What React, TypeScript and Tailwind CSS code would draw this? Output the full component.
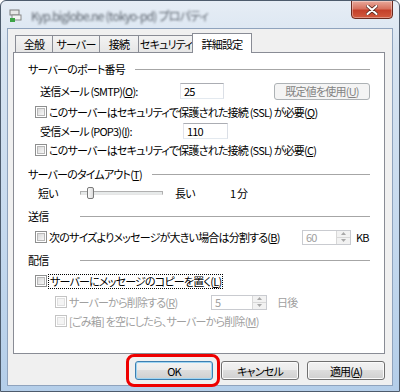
import React from 'react';

// Win7 風の「詳細設定」プロパティダイアログ
const jp = "font-['Noto_Sans_CJK_JP','Noto_Sans',sans-serif] [font-feature-settings:'palt'] tracking-[-0.8px]";

function K({ c }: { c: string }) {
  return <span className="underline underline-offset-[1px]">{c}</span>;
}

function Check({ disabled }: { disabled?: boolean }) {
  return (
    <span
      className={`w-[12px] h-[12px] shrink-0 border p-[1px] ${
        disabled ? 'border-[#c4c4c4] bg-white' : 'border-[#8e8f8f] bg-white'
      }`}
    >
      <span
        className={`block w-full h-full border ${
          disabled
            ? 'border-[#e0e0e0] bg-[#f4f4f4]'
            : 'border-[#b8b8b8] bg-[linear-gradient(135deg,#d9d9d9,#f7f7f7)]'
        }`}
      />
    </span>
  );
}

function Header({ children, narrow }: { children: React.ReactNode; narrow?: boolean }) {
  return (
    <div className="flex items-center h-[16px]">
      <span className={narrow ? 'w-[52px]' : 'mr-[10px]'}>{children}</span>
      <span className="flex-1 border-t border-[#a6a6a6]" />
    </div>
  );
}

function Spin({ value, className }: { value: string; className: string }) {
  return (
    <div className={`flex h-[15px] border border-[#c9cbd0] bg-white ${className}`}>
      <span className="flex-1 pl-[3px] text-[#a0a0a0] leading-[13px]">{value}</span>
      <div className="w-[14px] flex flex-col border-l border-[#d8d8d8]">
        <span className="flex-1 flex items-center justify-center bg-[#f2f2f2] border-b border-[#d8d8d8]">
          <svg width="5" height="3" viewBox="0 0 5 3">
            <path d="M0 3 L2.5 0 L5 3 Z" fill="#a8a8a8" />
          </svg>
        </span>
        <span className="flex-1 flex items-center justify-center bg-[#f2f2f2]">
          <svg width="5" height="3" viewBox="0 0 5 3">
            <path d="M0 0 L5 0 L2.5 3 Z" fill="#a8a8a8" />
          </svg>
        </span>
      </div>
    </div>
  );
}

function Btn({ children, def }: { children: React.ReactNode; def?: boolean }) {
  return (
    <div
      className={`w-[78px] h-[19px] rounded-[3px] border flex items-center justify-center text-black bg-[linear-gradient(#f2f2f2_0%,#ebebeb_50%,#dddddd_50%,#cfcfcf_100%)] ${
        def
          ? 'border-[#3c7fb1] shadow-[inset_0_0_0_1px_#9fd5f3]'
          : 'border-[#707070] shadow-[inset_0_0_0_1px_#fbfbfb]'
      }`}
    >
      {children}
    </div>
  );
}

const tabs = [
  { label: '全般', w: 'w-[38px]' },
  { label: 'サーバー', w: 'w-[48px]' },
  { label: '接続', w: 'w-[40px]' },
  { label: 'セキュリティ', w: 'w-[56px]' },
];

export default function App() {
  return (
    <div
      className={`relative w-[400px] h-[392px] overflow-hidden whitespace-nowrap rounded-t-[6px] border border-[#4d5b6c] bg-[linear-gradient(180deg,#e6edf5_0%,#d8e4f1_12%,#c5d9ee_60%,#b4cee9_100%)] text-[11px] leading-[14px] text-black ${jp}`}
    >
      {/* タイトルバー */}
      <div className="flex h-[27px]">
        <div className="flex items-center pl-[8px] pt-[2px] gap-[8px]">
          <svg width="14" height="14" viewBox="0 0 14 14">
            <rect x="1" y="1" width="9" height="5" fill="#e8e8e8" stroke="#7d7d7d" />
            <rect x="3" y="6" width="9" height="5" fill="#f4f4f4" stroke="#8a8a8a" />
            <rect x="1" y="9" width="5" height="4" fill="#3da447" />
          </svg>
          <span className="text-[12px] text-[#5e6670] blur-[1.3px]">Kyp.biglobe.ne (tokyo-pd) プロパティ</span>
        </div>
        <div className="ml-auto mr-[6px] -mt-px w-[42px] h-[19px] rounded-b-[4px] border border-[#6b2a1f] bg-[linear-gradient(#e9a99b_0%,#d7725f_45%,#c4402a_55%,#d25a3e_100%)] flex items-center justify-center shadow-[inset_0_0_0_1px_rgba(255,255,255,0.35)]">
          <svg width="12" height="10" viewBox="0 0 12 10">
            <path d="M1.5 1 L10.5 9 M10.5 1 L1.5 9" stroke="#5a2a20" strokeWidth="3.6" strokeLinecap="round" />
            <path d="M1.5 1 L10.5 9 M10.5 1 L1.5 9" stroke="#ffffff" strokeWidth="2" strokeLinecap="round" />
          </svg>
        </div>
      </div>

      {/* クライアント領域 */}
      <div className="mx-[6px] h-[358px] border border-[#8fa3bd] bg-[#f0f0f0]">
        {/* タブ */}
        <div className="flex items-end h-[23px] pl-[7px] pt-[3px]">
          {tabs.map((t) => (
            <div
              key={t.label}
              className={`${t.w} h-[17px] -ml-px first:ml-0 border border-b-0 border-[#898c95] bg-[linear-gradient(#f3f3f3,#e6e6e6)] flex items-center justify-center`}
            >
              {t.label}
            </div>
          ))}
          <div className="relative z-10 w-[60px] h-[20px] -ml-[2px] -mb-px border border-b-0 border-[#898c95] bg-white flex items-center justify-center">
            詳細設定
          </div>
        </div>

        {/* タブページ */}
        <div className="ml-[5px] w-[372px] h-[302px] border border-[#898c95] bg-white pl-[14px] pr-[14px] pt-[8px]">
          <Header>サーバーのポート番号</Header>

          <div className="flex items-center h-[16px] mt-[6px]">
            <span className="ml-[12px] w-[143px]">
              送信メール (SMTP)(<K c="O" />):
            </span>
            <span className="w-[45px] h-[16px] border border-[#abadb3] border-l-[#e2e3ea] border-r-[#dbdfe6] border-b-[#e3e9ef] pl-[3px] leading-[14px]">
              25
            </span>
            <span className="ml-[50px] w-[98px] h-[17px] rounded-[3px] border border-[#adb2b5] bg-[#f4f4f4] text-[#838383] flex items-center justify-center">
              既定値を使用(<K c="U" />)
            </span>
          </div>

          <div className="flex items-center gap-[2px] h-[16px] mt-[5px] ml-[7px]">
            <Check />
            <span>
              このサーバーはセキュリティで保護された接続 (SSL) が必要(<K c="Q" />)
            </span>
          </div>

          <div className="flex items-center h-[16px] mt-[3px]">
            <span className="ml-[12px] w-[143px]">
              受信メール (POP3)(<K c="I" />):
            </span>
            <span className="w-[45px] h-[16px] border border-[#abadb3] border-l-[#e2e3ea] border-r-[#dbdfe6] border-b-[#e3e9ef] pl-[3px] leading-[14px]">
              110
            </span>
          </div>

          <div className="flex items-center gap-[2px] h-[16px] mt-[3px] ml-[7px]">
            <Check />
            <span>
              このサーバーはセキュリティで保護された接続 (SSL) が必要(<K c="C" />)
            </span>
          </div>

          <div className="mt-[8px]">
            <Header>
              サーバーのタイムアウト(<K c="T" />)
            </Header>
          </div>

          <div className="flex items-center h-[16px] mt-[3px]">
            <span className="ml-[10px] w-[42px]">短い</span>
            <div className="relative w-[83px] h-[4px] border border-[#b0b0b0] border-b-[#e6e6e6] bg-[#e7eaea]">
              <span className="absolute left-[6px] -top-[5px] w-[7px] h-[12px] rounded-[2px] border border-[#7a7a7a] bg-[linear-gradient(90deg,#fbfbfb,#dcdcdc)]" />
            </div>
            <span className="ml-[12px] w-[55px]">長い</span>
            <span>1 分</span>
          </div>

          <div className="mt-[7px]">
            <Header narrow>送信</Header>
          </div>

          <div className="flex items-center h-[16px] mt-[5px] ml-[7px]">
            <Check />
            <span className="ml-[2px] w-[253px]">
              次のサイズよりメッセージが大きい場合は分割する(<K c="B" />)
            </span>
            <Spin value="60" className="w-[49px]" />
            <span className="ml-[5px]">KB</span>
          </div>

          <div className="mt-[7px]">
            <Header narrow>配信</Header>
          </div>

          <div className="flex items-center h-[16px] mt-[5px] ml-[7px]">
            <Check />
            <span className="ml-[1px] border border-dotted border-black leading-[13px] px-px">
              サーバーにメッセージのコピーを置く(<K c="L" />)
            </span>
          </div>

          <div className="flex items-center h-[16px] mt-[5px] ml-[27px] text-[#a0a0a0]">
            <Check disabled />
            <span className="ml-[2px] w-[142px]">
              サーバーから削除する(<K c="R" />)
            </span>
            <Spin value="5" className="w-[56px]" />
            <span className="ml-[10px]">日後</span>
          </div>

          <div className="flex items-center gap-[2px] h-[16px] mt-[3px] ml-[27px] text-[#a0a0a0]">
            <Check disabled />
            <span>
              [ごみ箱] を空にしたら、サーバーから削除(<K c="M" />)
            </span>
          </div>
        </div>

        {/* ボタン */}
        <div className="flex justify-end gap-[8px] mt-[7px] pr-[7px]">
          <Btn def>OK</Btn>
          <Btn>キャンセル</Btn>
          <Btn>
            適用(<K c="A" />)
          </Btn>
        </div>
      </div>

      {/* 注釈の赤枠 */}
      <div className="absolute left-[125px] top-[353px] w-[94px] h-[33px] rounded-[8px] border-[3px] border-[#ee0000]" />
    </div>
  );
}
